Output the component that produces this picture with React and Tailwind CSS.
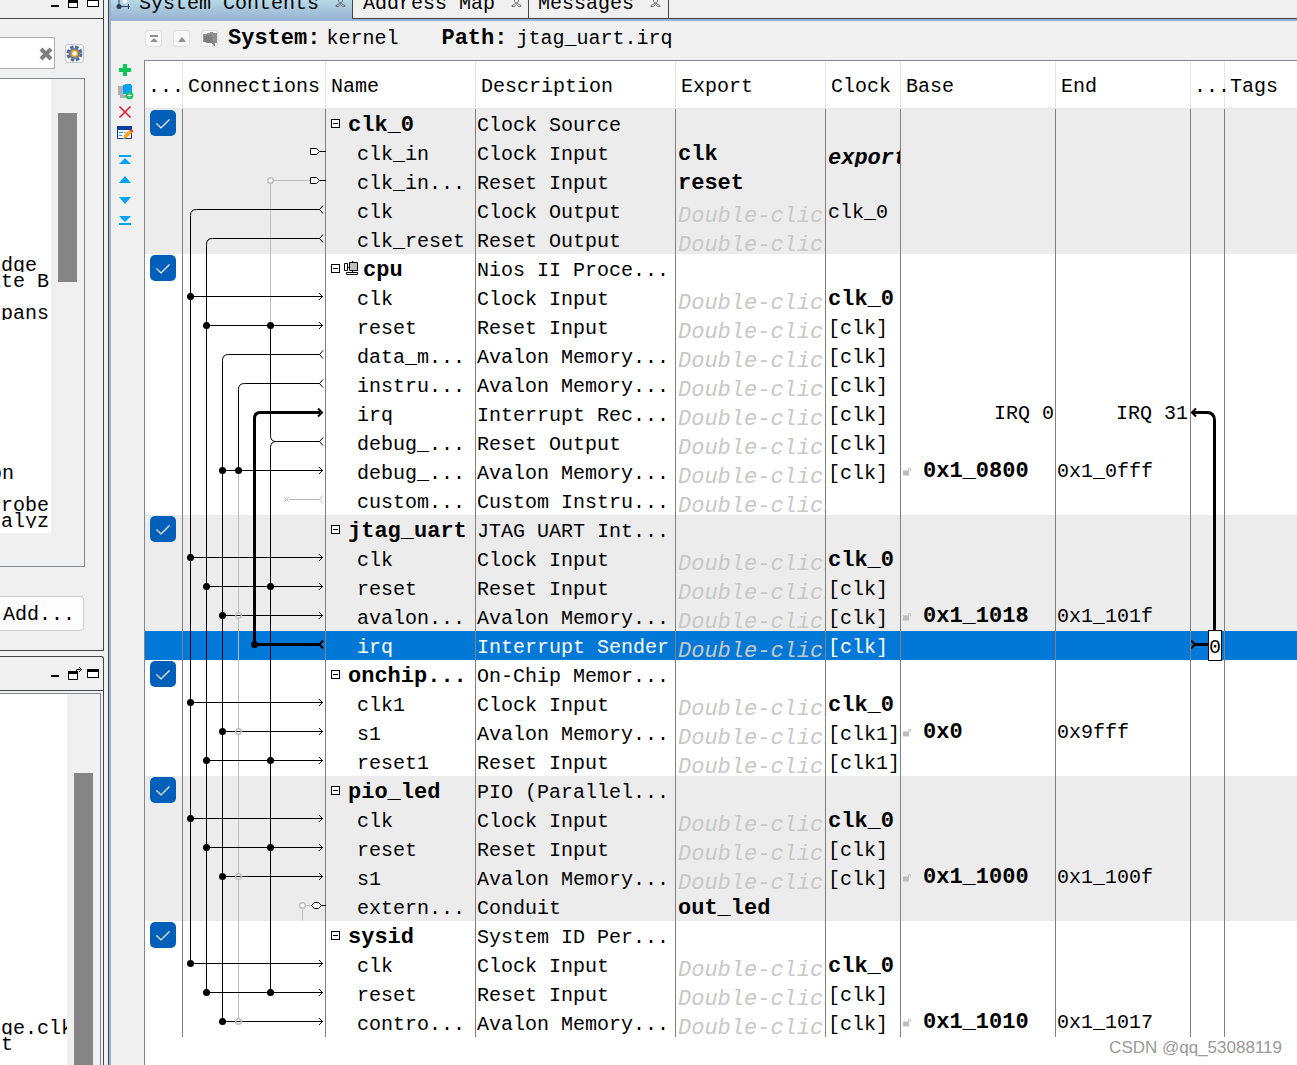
import React from 'react'
import clsx from 'clsx'

const HINT = 'Double-click'

// one entry per module, ports listed under it
const modules = [
  {
    name: 'clk_0', description: 'Clock Source',
    ports: [
      { name: 'clk_in', description: 'Clock Input', exported: 'clk', clock: 'exported', clockStyle: 'italic' },
      { name: 'clk_in...', description: 'Reset Input', exported: 'reset' },
      { name: 'clk', description: 'Clock Output', clock: 'clk_0' },
      { name: 'clk_reset', description: 'Reset Output' },
    ],
  },
  {
    name: 'cpu', description: 'Nios II Proce...', processor: true,
    ports: [
      { name: 'clk', description: 'Clock Input', clock: 'clk_0', clockStyle: 'bold' },
      { name: 'reset', description: 'Reset Input', clock: '[clk]' },
      { name: 'data_m...', description: 'Avalon Memory...', clock: '[clk]' },
      { name: 'instru...', description: 'Avalon Memory...', clock: '[clk]' },
      { name: 'irq', description: 'Interrupt Rec...', clock: '[clk]', irqFrom: 'IRQ 0', irqTo: 'IRQ 31' },
      { name: 'debug_...', description: 'Reset Output', clock: '[clk]' },
      { name: 'debug_...', description: 'Avalon Memory...', clock: '[clk]', base: '0x1_0800', end: '0x1_0fff' },
      { name: 'custom...', description: 'Custom Instru...' },
    ],
  },
  {
    name: 'jtag_uart', description: 'JTAG UART Int...',
    ports: [
      { name: 'clk', description: 'Clock Input', clock: 'clk_0', clockStyle: 'bold' },
      { name: 'reset', description: 'Reset Input', clock: '[clk]' },
      { name: 'avalon...', description: 'Avalon Memory...', clock: '[clk]', base: '0x1_1018', end: '0x1_101f' },
      { name: 'irq', description: 'Interrupt Sender', clock: '[clk]', selected: true },
    ],
  },
  {
    name: 'onchip...', description: 'On-Chip Memor...',
    ports: [
      { name: 'clk1', description: 'Clock Input', clock: 'clk_0', clockStyle: 'bold' },
      { name: 's1', description: 'Avalon Memory...', clock: '[clk1]', base: '0x0', end: '0x9fff' },
      { name: 'reset1', description: 'Reset Input', clock: '[clk1]' },
    ],
  },
  {
    name: 'pio_led', description: 'PIO (Parallel...',
    ports: [
      { name: 'clk', description: 'Clock Input', clock: 'clk_0', clockStyle: 'bold' },
      { name: 'reset', description: 'Reset Input', clock: '[clk]' },
      { name: 's1', description: 'Avalon Memory...', clock: '[clk]', base: '0x1_1000', end: '0x1_100f' },
      { name: 'extern...', description: 'Conduit', exported: 'out_led' },
    ],
  },
  {
    name: 'sysid', description: 'System ID Per...',
    ports: [
      { name: 'clk', description: 'Clock Input', clock: 'clk_0', clockStyle: 'bold' },
      { name: 'reset', description: 'Reset Input', clock: '[clk]' },
      { name: 'contro...', description: 'Avalon Memory...', clock: '[clk]', base: '0x1_1010', end: '0x1_1017' },
    ],
  },
]

const headers = ['...', 'Connections', 'Name', 'Description', 'Export', 'Clock', 'Base', 'End', '...', 'Tags']

// ---------- connection drawing ----------

const rowY = (i) => 29 * i + 13.5
const GRAY = '#bdbdbd'

function Fork({ row, bold, color = '#000' }) {
  const y = rowY(row)
  return <path d={`M140 ${y - 4}L136.500 ${y}L140 ${y + 4}`} stroke={color} strokeWidth={bold ? 2 : 1} />
}

function Arrow({ row, from }) {
  const y = rowY(row)
  return <path d={`M${from} ${y}H140M136 ${y - 3.500}L139.500 ${y}L136 ${y + 3.500}`} />
}

function Dot({ x, row }) {
  return <circle cx={x} cy={rowY(row)} r="3.500" fill="#000" stroke="none" />
}

function OpenDot({ x, row, crossed }) {
  const y = rowY(row)
  return (
    <>
      <circle cx={x} cy={y} r="2.800" stroke={GRAY} strokeWidth="1.400" fill="#fff" />
      {crossed && <path d={`M${x - 2} ${y}h4`} stroke="#000" />}
    </>
  )
}

// output port that turns down into a bus
function Bus({ x, from, to, width = 1, end = 137 }) {
  const y = rowY(from)
  return <path d={`M${end} ${y}H${x + 6}Q${x} ${y} ${x} ${y + 6}V${rowY(to)}`} strokeWidth={width} />
}

function Connections() {
  return (
    <svg className="absolute left-[38px] top-12 pointer-events-none" width="143" height="928" fill="none" stroke="#000">
      {/* unused routes */}
      <path d={`M87.500 ${rowY(2)}V${rowY(7)}M91 ${rowY(2)}H127`} stroke={GRAY} />
      <path d={`M55.500 ${rowY(12)}V${rowY(31)}`} stroke={GRAY} />
      <path d={`M106 ${rowY(13)}H137M101 ${rowY(13) - 2.500}l5 5m0 -5l-5 5`} stroke={GRAY} />
      <path d={`M119.500 ${rowY(27)}v15M119 ${rowY(27)}h10`} stroke={GRAY} />

      <Bus x={7.5} from={3} to={29} />
      <Bus x={23.5} from={4} to={30} />
      <Bus x={39.5} from={8} to={31} />
      <Bus x={55.5} from={9} to={12} />
      <Bus x={71.5} from={10} to={18} width={3} />
      <Bus x={87.5} from={11} to={30} />
      <path d={`M87.500 ${rowY(7)}V${rowY(11) - 6}Q87.500 ${rowY(11)} 93 ${rowY(11)}`} />
      <path d={`M71.500 ${rowY(18)}H137`} strokeWidth="3" />
      <path d={`M135 ${rowY(10) - 4}L139 ${rowY(10)}L135 ${rowY(10) + 4}`} strokeWidth="2" />

      {[3, 4, 8, 9, 11].map((r) => <Fork key={r} row={r} />)}
      <Fork row={13} color={GRAY} />
      <Fork row={18} bold />

      {[6, 15, 20, 24, 29].map((r) => (
        <g key={r}>
          <Arrow row={r} from={7} />
          <Dot x={7.5} row={r} />
        </g>
      ))}
      {[7, 16, 22, 25, 30].map((r) => (
        <g key={r}>
          <Arrow row={r} from={23} />
          <Dot x={23.5} row={r} />
          <Dot x={87.5} row={r} />
        </g>
      ))}
      {[12, 17, 21, 26, 31].map((r) => (
        <g key={r}>
          <Arrow row={r} from={39} />
          <Dot x={39.5} row={r} />
          {r === 12 ? <Dot x={55.5} row={r} /> : <OpenDot x={55.5} row={r} crossed />}
        </g>
      ))}
      <Dot x={71.5} row={18} />

      {/* exported ports */}
      <OpenDot x={87.5} row={2} />
      <OpenDot x={119.5} row={27} />
      {[1, 2].map((r) => (
        <g key={r}>
          <path d={`M127.500 ${rowY(r) - 3}h6l3 3l-3 3h-6z`} fill="#fff" />
          <path d={`M137 ${rowY(r)}h6`} />
        </g>
      ))}
      <path d={`M128.500 ${rowY(27)}l3 -3h4l3 3l-3 3h-4zM139 ${rowY(27)}h4`} fill="#fff" />
    </svg>
  )
}

function IrqRoute() {
  return (
    <svg className="absolute left-[1046px] top-12 pointer-events-none" width="34" height="928" fill="none" stroke="#000" strokeWidth="3">
      <path d={`M2 ${rowY(10)}H16Q23.500 ${rowY(10)} 23.500 ${rowY(10) + 8}V522`} />
      <path d={`M5 ${rowY(10) - 4}L1 ${rowY(10)}L5 ${rowY(10) + 4}`} strokeWidth="2" />
      <path d={`M3 ${rowY(18)}H18`} />
      <path d={`M0 ${rowY(18) - 4}L4 ${rowY(18)}L0 ${rowY(18) + 4}`} strokeWidth="2" />
      <rect x="17.500" y="521.500" width="13" height="30" fill="#fff" strokeWidth="1" />
      <text x="24" y="544" textAnchor="middle" fill="#000" stroke="none" className="text-[20px]">0</text>
    </svg>
  )
}

// ---------- table ----------

function Cell({ children, className, pad = 'pl-px', last }) {
  return (
    <td className={clsx('p-0', !last && 'border-r border-[#808080]')}>
      <div className={clsx('h-[29px] overflow-hidden whitespace-nowrap', pad, className)}>{children}</div>
    </td>
  )
}

function Enabled({ name }) {
  return (
    <label className="relative block size-[26px]">
      <input type="checkbox" defaultChecked aria-label={`Use ${name}`} className="block size-[26px] appearance-none rounded-[5px] bg-[#005fb8]" />
      <svg className="absolute inset-0 pointer-events-none" width="26" height="26" fill="none" stroke="#fff" strokeWidth="1.200">
        <path d="M6.500 13.500l4.500 4.500L19.500 9.500" />
      </svg>
    </label>
  )
}

function ProcessorIcon() {
  return (
    <svg width="14" height="14" fill="#fff" stroke="#000">
      <path d="M.5 2.500h3v7h-3zM5.500 1.500h8v8h-8zM2.500 11.500h11v2h-11z" />
      <path d="M6 2h7v7H6z" fill="#c0c0c0" stroke="none" />
      <path d="M3 6.500h2M8.500 0v1M8.500 10v1" />
    </svg>
  )
}

function Lock() {
  return (
    <svg className="ml-px mt-[7px] shrink-0" width="9" height="9" fill="none" stroke="#c4c4c4">
      <path d="M0 3.500h6v5H0z" fill="#bdbdbd" stroke="none" />
      <path d="M5.500 4V1.500h2V4" />
    </svg>
  )
}

function ModuleRow({ mod, shaded }) {
  return (
    <tr className={shaded ? 'bg-[#ececec]' : 'bg-white'}>
      <Cell pad="pl-[5px]" className="pt-px"><Enabled name={mod.name} /></Cell>
      <Cell />
      <Cell pad="pl-[5px]" className="flex">
        <button type="button" aria-label="Collapse" className="mt-[10px] flex h-[9px] w-[9px] shrink-0 items-center justify-center border border-black bg-white">
          <span className="block h-px w-[5px] bg-black" />
        </button>
        {mod.processor && <span className="ml-1 mt-[7px]"><ProcessorIcon /></span>}
        <span className={clsx('pt-[5px] text-[22px] font-bold', mod.processor ? 'ml-[5px]' : 'ml-2')}>{mod.name}</span>
      </Cell>
      <Cell className="pt-[5px]">{mod.description}</Cell>
      <Cell />
      <Cell />
      <Cell />
      <Cell />
      <Cell />
      <Cell last />
    </tr>
  )
}

function PortRow({ port, shaded }) {
  const hasHint = !port.exported
  return (
    <tr className={port.selected ? 'bg-[#0078d7] text-white' : shaded ? 'bg-[#ececec]' : 'bg-white'}>
      <Cell />
      <Cell />
      <Cell pad="pl-[31px]" className="pt-[5px]">{port.name}</Cell>
      <Cell className="pt-[5px]">{port.description}</Cell>
      <Cell pad="pl-[2px]" className={clsx('text-[22px]', hasHint ? 'pt-[9px] italic text-[#c8c8c8]' : 'pt-[5px] font-bold')}>
        {port.exported || HINT}
      </Cell>
      <Cell
        pad="pl-[2px]"
        className={clsx(
          port.clockStyle === 'italic' ? 'pt-[9px] text-[22px] italic font-bold' : 'pt-[5px]',
          port.clockStyle === 'bold' && 'text-[22px] font-bold',
        )}
      >
        {port.clock}
      </Cell>
      <Cell className={clsx('pt-[3px]', port.irqFrom && 'pr-px text-right')}>
        {port.irqFrom}
        {port.base && (
          <span className="flex gap-[11px]">
            <Lock />
            <span className="text-[22px] font-bold">{port.base}</span>
          </span>
        )}
      </Cell>
      <Cell className={clsx('pt-[3px]', port.irqTo && 'pr-[2px] text-right')}>{port.irqTo || port.end}</Cell>
      <Cell />
      <Cell last />
    </tr>
  )
}

function SystemTable() {
  return (
    <div className="relative min-w-0 flex-1 overflow-hidden border-l border-t border-[#828790] bg-white">
      <table className="w-full table-fixed border-separate border-spacing-0 leading-[23px]">
        <colgroup>
          <col className="w-[38px]" />
          <col className="w-[143px]" />
          <col className="w-[150px]" />
          <col className="w-[200px]" />
          <col className="w-[150px]" />
          <col className="w-[75px]" />
          <col className="w-[155px]" />
          <col className="w-[135px]" />
          <col className="w-[34px]" />
          <col />
        </colgroup>
        <thead>
          <tr>
            {headers.map((h, i) => (
              <th key={i} className="h-12 whitespace-nowrap border-b border-r border-[#e5e5e5] p-0 pl-[5px] pt-1 text-left font-normal last:border-r-0">
                {h === '...' ? <span className="-ml-[2px]">{h}</span> : h}
              </th>
            ))}
          </tr>
        </thead>
        <tbody>
          {modules.map((mod, i) => (
            <React.Fragment key={mod.name}>
              <ModuleRow mod={mod} shaded={i % 2 === 0} />
              {mod.ports.map((port, j) => <PortRow key={j} port={port} shaded={i % 2 === 0} />)}
            </React.Fragment>
          ))}
        </tbody>
      </table>
      <Connections />
      <IrqRoute />
    </div>
  )
}

// ---------- toolbars and tabs ----------

function SideTools() {
  const tools = [
    ['Add', <path d="M8 4h4v4h4v4h-4v4H8v-4H4V8h4z" fill="#00c853" />],
    ['Add module', (
      <>
        <path d="M3 5h5v9H3zM5 14h8v3H5z" fill="#b0b0b0" />
        <path d="M8 4h2V3h6v1h1v9H8z" fill="#00a2f5" />
        <circle cx="14.500" cy="14.500" r="3.800" fill="#00c853" />
        <path d="M12.500 14.500h4M14.500 12.500v4" stroke="#fff" />
      </>
    )],
    ['Remove', <path d="M4.500 4.500l11 11M15.500 4.500l-11 11" stroke="#e81123" strokeWidth="1.500" />],
    ['Edit', (
      <>
        <path d="M2.500 4.500h14v11h-14z" fill="#fff" stroke="#0b3c9e" />
        <path d="M2 3h15v4H2z" fill="#0b3c9e" />
        <path d="M4 9.500h4M4 12.500h3" stroke="#00a2f5" />
        <path d="M9 9.500h5M9 12.500h3" stroke="#aaa" />
        <path d="M8 16l1-4 6-5 2.500 2.500-6 5.500z" fill="#f9a825" />
        <path d="M14.500 7.500l2-1.500 2 2-1.500 1.500z" fill="#e53935" />
      </>
    )],
  ]
  const moves = [
    ['Move to top', 'M4 5h12v2H4zM4 14l6-6 6 6z'],
    ['Move up', 'M4 13l6-7 6 7z'],
    ['Move down', 'M4 7h12l-6 7z'],
    ['Move to bottom', 'M4 6h12l-6 6zM4 13h12v2H4z'],
  ]
  return (
    <div className="flex w-[33px] shrink-0 flex-col items-center pr-[5px]">
      {tools.map(([label, icon]) => (
        <button key={label} type="button" aria-label={label} className="flex h-[21px] items-start">
          <svg width="20" height="20" fill="none">{icon}</svg>
        </button>
      ))}
      <div className="h-[6px]" />
      {moves.map(([label, d]) => (
        <button key={label} type="button" aria-label={label} className="h-5">
          <svg width="20" height="20" fill="#00a2f5"><path d={d} /></svg>
        </button>
      ))}
    </div>
  )
}

function PinIcon() {
  return (
    <svg className="mb-[10px]" width="11" height="8" fill="none" stroke="#555">
      <path d="M3.500 0v1.500l2 1.500 2-1.500V0M5.500 3L1 5.500v1h2.500l2-2 2 2H10v-1z" strokeWidth=".8" />
    </svg>
  )
}

function Tabs() {
  return (
    <div className="flex h-[21px] shrink-0 border-b-2 border-[#98b4d4]" role="tablist">
      <button type="button" role="tab" className="flex h-[19px] w-[241px] items-end overflow-hidden bg-linear-to-b from-[#b7d9e6] to-[#98b4d4] pl-[5px] pb-px">
        <svg className="mb-2 shrink-0" width="16" height="11" fill="none" stroke="#2a3f55">
          <path d="M3 0v7M3 7.500h11M12.500 5v5" />
          <circle cx="3" cy="7.500" r="2.500" fill="#2a3f55" stroke="none" />
          <circle cx="9" cy="2.500" r="2" fill="#fff" stroke="none" />
        </svg>
        <span className="ml-[7px] mr-4 leading-[28px]">System Contents</span>
        <PinIcon />
      </button>
      <button type="button" role="tab" className="flex h-[19px] w-[176px] items-end overflow-hidden border-b border-l border-[#444] pl-[10px]">
        <span className="mr-4 leading-[28px]">Address Map</span>
        <PinIcon />
      </button>
      <button type="button" role="tab" className="flex h-[19px] w-[141px] items-end overflow-hidden border-x border-b border-[#444] pl-[9px]">
        <span className="mr-4 leading-[28px]">Messages</span>
        <PinIcon />
      </button>
      <div className="h-[19px] flex-1 border-b border-[#444]" />
    </div>
  )
}

function PathBar() {
  const box = 'flex size-[17px] items-center justify-center rounded-[3px] border border-[#e0e0e0] bg-[#f8f8f8]'
  return (
    <div className="flex h-[39px] shrink-0 items-center pb-1 pl-[34px]">
      <div className="flex gap-[11px]">
        <button type="button" aria-label="Top level" className={box}>
          <svg width="9" height="9" fill="#909090"><path d="M1 1h8v2H1zM1 8l4-4 4 4z" /></svg>
        </button>
        <button type="button" aria-label="Up" className={box}>
          <svg width="9" height="9" fill="#909090"><path d="M1 8l4-5 4 5z" /></svg>
        </button>
        <button type="button" aria-label="Drill into" className={box}>
          <svg className="shrink-0" width="16" height="16" fill="#8f8f8f">
            <path d="M5 2h3V1h3v1h4v10H6v-1H1V3h4z" />
            <circle cx="6" cy="8" r="4" fill="#7d7d7d" />
            <path d="M8 10l4 5h1v-2l-3-4z" fill="#7d7d7d" />
          </svg>
        </button>
      </div>
      <b className="ml-[10px] text-[22px]">System:</b>
      <span className="ml-[6px]">kernel</span>
      <b className="ml-[43px] text-[22px]">Path:</b>
      <span className="ml-[9px]">jtag_uart.irq</span>
    </div>
  )
}

// ---------- left column ----------

function Minimize() {
  return <button type="button" aria-label="Minimize" className="mt-[5px] h-[2px] w-2 bg-black" />
}

function Maximize() {
  return <button type="button" aria-label="Maximize" className="h-[9px] w-3 border border-t-3 border-black bg-white" />
}

function Snippet({ text, className }) {
  return <div className={clsx('h-4 overflow-hidden whitespace-nowrap leading-[19px]', className)}><span className="-ml-[11px]">{text}</span></div>
}

function LibraryPanel() {
  return (
    <section className="flex h-[651px] shrink-0 flex-col border-b border-r border-[#444]">
      <div className="flex h-[19px] shrink-0 justify-end gap-[9px] border-b border-[#444] pr-1">
        <Minimize />
        <button type="button" aria-label="Detach" className="h-[8px] w-[10px] border border-t-3 border-black bg-white" />
        <button type="button" aria-label="Maximize" className="h-[7px] w-3 border border-black bg-white" />
      </div>
      <div className="mt-[18px] flex shrink-0 items-center gap-[10px]">
        <label className="relative block h-8 w-[55px]">
          <input type="text" aria-label="Search" className="h-8 w-[55px] border border-l-0 border-[#adadad] bg-white" />
          <svg className="absolute right-[2px] top-[10px]" width="14" height="14" stroke="#808080" strokeWidth="4">
            <path d="M2 2l10 10M12 2L2 12" />
          </svg>
        </label>
        <button type="button" aria-label="Settings" className="flex size-[19px] items-center justify-center rounded-[3px] border border-[#c8c8c8] bg-[#fafafa]">
          <svg className="shrink-0" width="17" height="17" viewBox="0 0 17 17">
            <circle cx="8.500" cy="8.500" r="6.500" fill="none" stroke="#4f6a8f" strokeWidth="3" strokeDasharray="3.400 1.700" />
            <circle cx="8.500" cy="8.500" r="5.800" fill="#6480a6" />
            <circle cx="8.500" cy="8.500" r="3" fill="#fff" stroke="#f39c12" strokeWidth="1.500" />
          </svg>
        </button>
      </div>
      <div className="mt-[9px] flex h-[489px] w-[85px] shrink-0 border border-l-0 border-[#828790]">
        <div className="h-[454px] w-[51px] overflow-hidden bg-white pt-[177px]">
          <Snippet text="idge" />
          <Snippet text="ite B" />
          <Snippet text="pans" className="mt-4 pl-3" />
          <Snippet text="on" className="mt-36 pl-px" />
          <Snippet text="Probe" className="mt-4" />
          <Snippet text="nalyz" />
        </div>
        <div className="ml-[7px] mt-[34px] h-[169px] w-[19px] bg-[#858585]" />
      </div>
      <button type="button" className="mt-[29px] h-[35px] w-[84px] shrink-0 rounded-r border border-l-0 border-[#d0d0d0] bg-[#fdfdfd] pl-[3px] pt-[3px] text-left leading-[28px]">
        Add...
      </button>
    </section>
  )
}

function HierarchyPanel() {
  return (
    <section className="mt-[5px] flex min-h-0 flex-1 flex-col rounded-tr-[3px] border-r border-t border-[#444]">
      <div className="flex h-[34px] shrink-0 items-center justify-end gap-[9px] border-b border-[#444] pr-1">
        <Minimize />
        <button type="button" aria-label="Detach" className="-mr-1">
          <svg className="block" width="14" height="14" fill="#fff" stroke="#000">
            <path d="M.5 4.500h9v8h-9z" />
            <path d="M0 4h10v3H0z" fill="#000" stroke="none" />
            <path d="M8.500 5V2.500h4M11 0l2.500 2.500-2.500 2.500" fill="none" />
          </svg>
        </button>
        <Maximize />
      </div>
      <div className="mr-[2px] mt-[2px] flex min-h-0 flex-1 border-r border-t border-[#828790]">
        <div className="w-[67px] overflow-hidden bg-white pt-[325px]">
          <Snippet text="dge.clk" />
          <Snippet text="rt" />
        </div>
        <div className="ml-[7px] mt-[79px] w-[19px] bg-[#858585]" />
      </div>
    </section>
  )
}

export default function App() {
  return (
    <div className="relative flex h-screen overflow-hidden bg-[#f0f0f0] font-['Liberation_Mono',monospace] text-[20px] text-black">
      <aside className="flex w-[104px] shrink-0 flex-col">
        <LibraryPanel />
        <HierarchyPanel />
      </aside>
      <main className="ml-1 flex min-w-0 flex-1 border-l border-[#444]">
        <div className="flex min-w-0 flex-1 flex-col border-l-2 border-[#98b4d4]">
          <Tabs />
          <PathBar />
          <div className="flex min-h-0 flex-1">
            <SideTools />
            <SystemTable />
          </div>
        </div>
      </main>
      <span className="absolute bottom-[7px] right-[15px] font-['Liberation_Sans',sans-serif] text-[17px] leading-5 text-[#999]">
        CSDN @qq_53088119
      </span>
    </div>
  )
}
